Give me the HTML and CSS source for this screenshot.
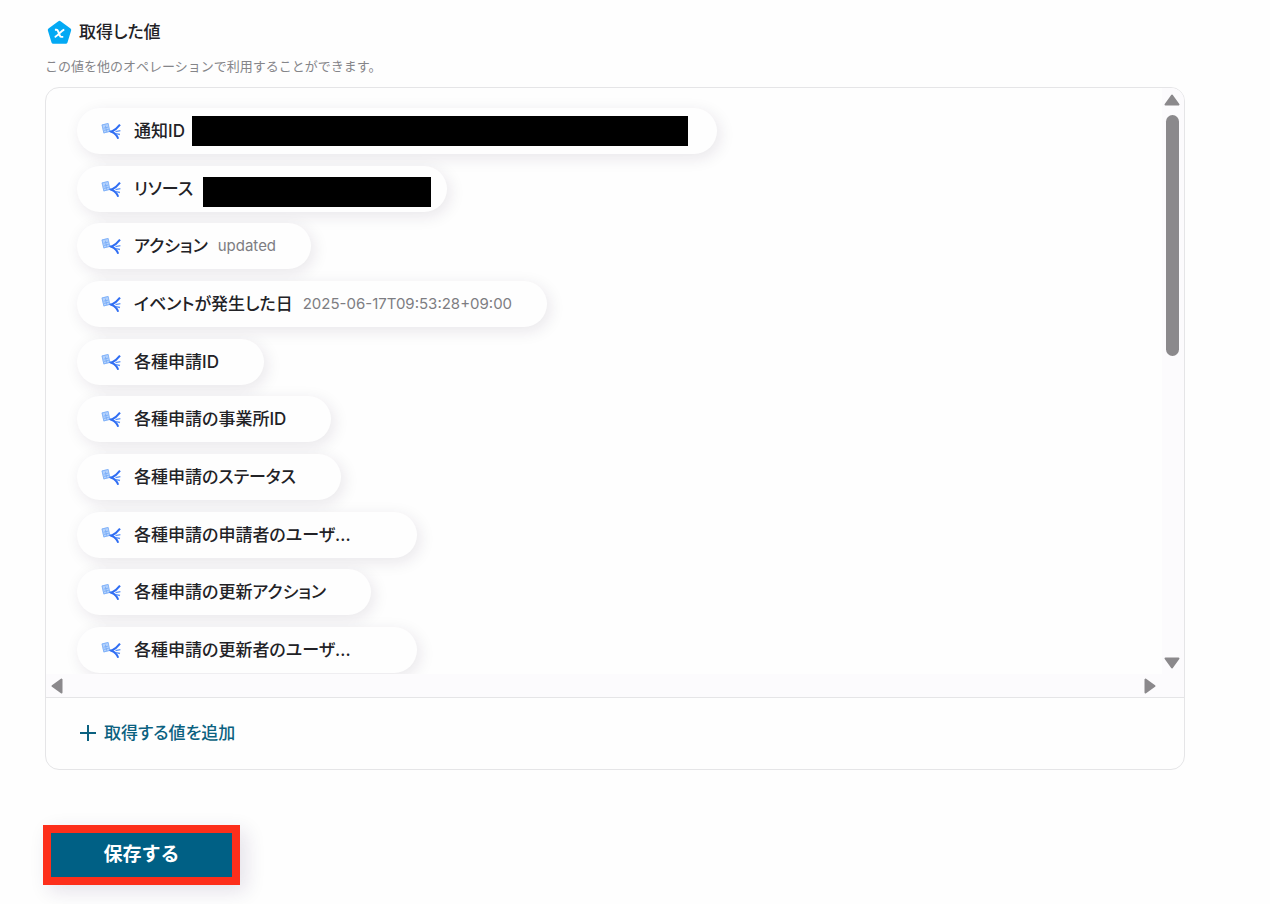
FILE: index.html
```html
<!DOCTYPE html>
<html lang="ja">
<head>
<meta charset="utf-8">
<title>取得した値</title>
<link rel="stylesheet" href="styles.css">
</head>
<body>
<svg class="defs" width="0" height="0" aria-hidden="true">
  <symbol id="app" viewBox="0 0 20 18">
    <path d="M.6 2.600 7.200 1l1.800 8.800-6.400 1.600z" fill="#b4d2fc"/>
    <path d="M1 3 7.200 1.500 8.800 9.400 2.800 10.900zM2.500 6.200 7.300 5.100M3 8.400 7.800 7.300M4.400 3.600l1.200 6" stroke="#74a9f7" stroke-width=".8" fill="none"/>
    <path d="M8.500 9 12 9.700" stroke="#6aa2f8" stroke-width="1.900" fill="none"/>
    <path d="M19 2.700Q15.500 7.400 10.500 9.700Q15.500 11.700 17.200 16.800" stroke="#2f6df3" stroke-width="2" fill="none"/>
    <path d="M14.500 9.600 19.400 8.600M15 11.600 19 12.500" stroke="#5c93f8" stroke-width="1.300" fill="none"/>
  </symbol>
</svg>
<main class="page">
  <header class="head">
    <h1 class="title">
      <svg class="badge" viewBox="0 0 24 24" aria-hidden="true"><path d="M12 2.500 21.500 9.600 18 21H6L2.500 9.600z" fill="#03a9f4" stroke="#03a9f4" stroke-width="3.500" stroke-linejoin="round"/><path d="M7.600 9.400h1.500c.8 0 1.200.5 1.600 1.500l1.500 3.800c.4 1 .8 1.500 1.700 1.500h1.700M16.600 9.300c-2.600.3-6.200 6.300-9.200 7" fill="none" stroke="#fff" stroke-width="1.900"/></svg>
      取得した値
    </h1>
    <p class="note">この値を他のオペレーションで利用することができます。</p>
  </header>
  <section class="panel">
    <div class="scroller">
      <ul class="list">
        <li class="pill pill-id"><svg class="app"><use href="#app"/></svg><span class="label">通知ID</span><span class="mask mask-long"></span></li>
        <li class="pill pill-resource"><svg class="app"><use href="#app"/></svg><span class="label">リソース</span><span class="mask mask-short"></span></li>
        <li class="pill"><svg class="app"><use href="#app"/></svg><span class="label">アクション</span><span class="value">updated</span></li>
        <li class="pill"><svg class="app"><use href="#app"/></svg><span class="label">イベントが発生した日</span><span class="value">2025-06-17T09:53:28+09:00</span></li>
        <li class="pill"><svg class="app"><use href="#app"/></svg><span class="label">各種申請ID</span><span class="value"></span></li>
        <li class="pill"><svg class="app"><use href="#app"/></svg><span class="label">各種申請の事業所ID</span><span class="value"></span></li>
        <li class="pill"><svg class="app"><use href="#app"/></svg><span class="label">各種申請のステータス</span><span class="value"></span></li>
        <li class="pill"><svg class="app"><use href="#app"/></svg><span class="label label-cut">各種申請の申請者のユーザ...</span><span class="value"></span></li>
        <li class="pill"><svg class="app"><use href="#app"/></svg><span class="label">各種申請の更新アクション</span><span class="value"></span></li>
        <li class="pill"><svg class="app"><use href="#app"/></svg><span class="label label-cut">各種申請の更新者のユーザ...</span><span class="value"></span></li>
      </ul>
      <div class="bar-v" aria-hidden="true">
        <svg class="arrow" viewBox="0 0 16 12"><path d="M8 1.500 14.500 10.500h-13z"/></svg>
        <span class="thumb"></span>
        <svg class="arrow arrow-end" viewBox="0 0 16 12"><path d="M8 10.500 14.500 1.500h-13z"/></svg>
      </div>
      <div class="bar-h" aria-hidden="true">
        <svg class="arrow-side" viewBox="0 0 12 16"><path d="M1.500 8 10.500 1.500v13z"/></svg>
        <svg class="arrow-side" viewBox="0 0 12 16"><path d="M10.500 8 1.500 1.500v13z"/></svg>
      </div>
    </div>
    <div class="foot">
      <button class="add" type="button"><svg class="plus" viewBox="0 0 16 16" aria-hidden="true"><path d="M8 0v16M0 8h16"/></svg>取得する値を追加</button>
    </div>
  </section>
  <button class="save" type="button">保存する</button>
</main>
</body>
</html>
```
FILE: styles.css
```css
* { box-sizing: border-box; }
body {
  margin: 0;
  background: #fefefe;
  color: #222226;
  font-family: Inter, "Noto Sans CJK JP", sans-serif;
  font-feature-settings: "palt";
}
.defs { position: absolute; }
.page { padding: 20px 85px 19px 45px; }
.title {
  display: flex;
  align-items: center;
  gap: 7px;
  margin: 0;
  padding-left: 2px;
  font-size: 17px;
  line-height: 25px;
  font-weight: 500;
}
.badge { width: 25px; height: 25px; }
.note {
  margin: 11px 0;
  font-size: 13px;
  line-height: 20px;
  font-feature-settings: normal;
  color: #858589;
}
.panel {
  border: 1px solid #e5e5e7;
  border-radius: 14px;
  overflow: hidden;
}
.scroller {
  display: grid;
  grid-template-columns: 1fr 22px;
  grid-template-rows: 586px 23px;
  border-bottom: 1px solid #e5e5e7;
}
.list {
  display: flex;
  flex-direction: column;
  align-items: flex-start;
  justify-content: space-between;
  margin: 0;
  padding: 20px 31px 1px;
  list-style: none;
  overflow: hidden;
}
.pill {
  display: flex;
  align-items: center;
  gap: 10px;
  height: 46px;
  padding: 0 35px 0 24px;
  border-radius: 23px;
  background: #fefefe;
  box-shadow: 3px 4px 16px rgba(40, 20, 60, 0.1);
}
.pill-id { gap: 6px; padding-right: 29px; }
.pill-resource { padding-right: 16px; }
.app { flex: none; width: 20px; height: 18px; }
.label {
  padding-left: 3px;
  font-size: 17px;
  line-height: 24px;
  font-weight: 500;
  white-space: nowrap;
}
.pill-id .label { padding: 0 1px 0 7px; }
.label-cut { width: 241px; }
.value {
  font-size: 15px;
  line-height: 24px;
  color: #7d7d82;
}
.mask { height: 30px; background: #000; }
.mask-long { width: 496px; }
.mask-short { width: 228px; margin-top: 6px; }
.bar-v {
  display: flex;
  flex-direction: column;
  align-items: center;
  gap: 9px;
  padding: 6px 2px 5px 0;
  background: #fcfbfd;
}
.arrow { width: 16px; height: 12px; }
.arrow-end { margin-top: auto; }
.arrow path, .arrow-side path {
  fill: #8b898c;
  stroke: #8b898c;
  stroke-width: 2px;
  stroke-linejoin: round;
}
.thumb {
  width: 13px;
  height: 241px;
  border-radius: 7px;
  background: #8b898c;
}
.bar-h {
  grid-column: 1 / -1;
  display: flex;
  align-items: center;
  justify-content: space-between;
  padding: 0 28px 0 5px;
  background: #fcfbfd;
}
.arrow-side { width: 12px; height: 16px; }
.foot { padding: 23px 34px 24px; }
.add {
  display: flex;
  align-items: center;
  gap: 8px;
  padding: 0;
  border: 0;
  background: none;
  color: #0b6180;
  font: 500 17px/24px Inter, "Noto Sans CJK JP", sans-serif;
  font-feature-settings: "palt";
}
.plus { width: 16px; height: 16px; }
.plus path { stroke: #0b6180; stroke-width: 2px; }
.save {
  display: block;
  width: 197px;
  height: 60px;
  margin: 55px 0 0 -2px;
  padding: 0;
  border: 8px solid #fd2f1b;
  background: #006085;
  color: #fff;
  font: 700 19px/28px Inter, "Noto Sans CJK JP", sans-serif;
  box-shadow: 6px 6px 20px rgba(40, 20, 80, 0.12);
}
```
